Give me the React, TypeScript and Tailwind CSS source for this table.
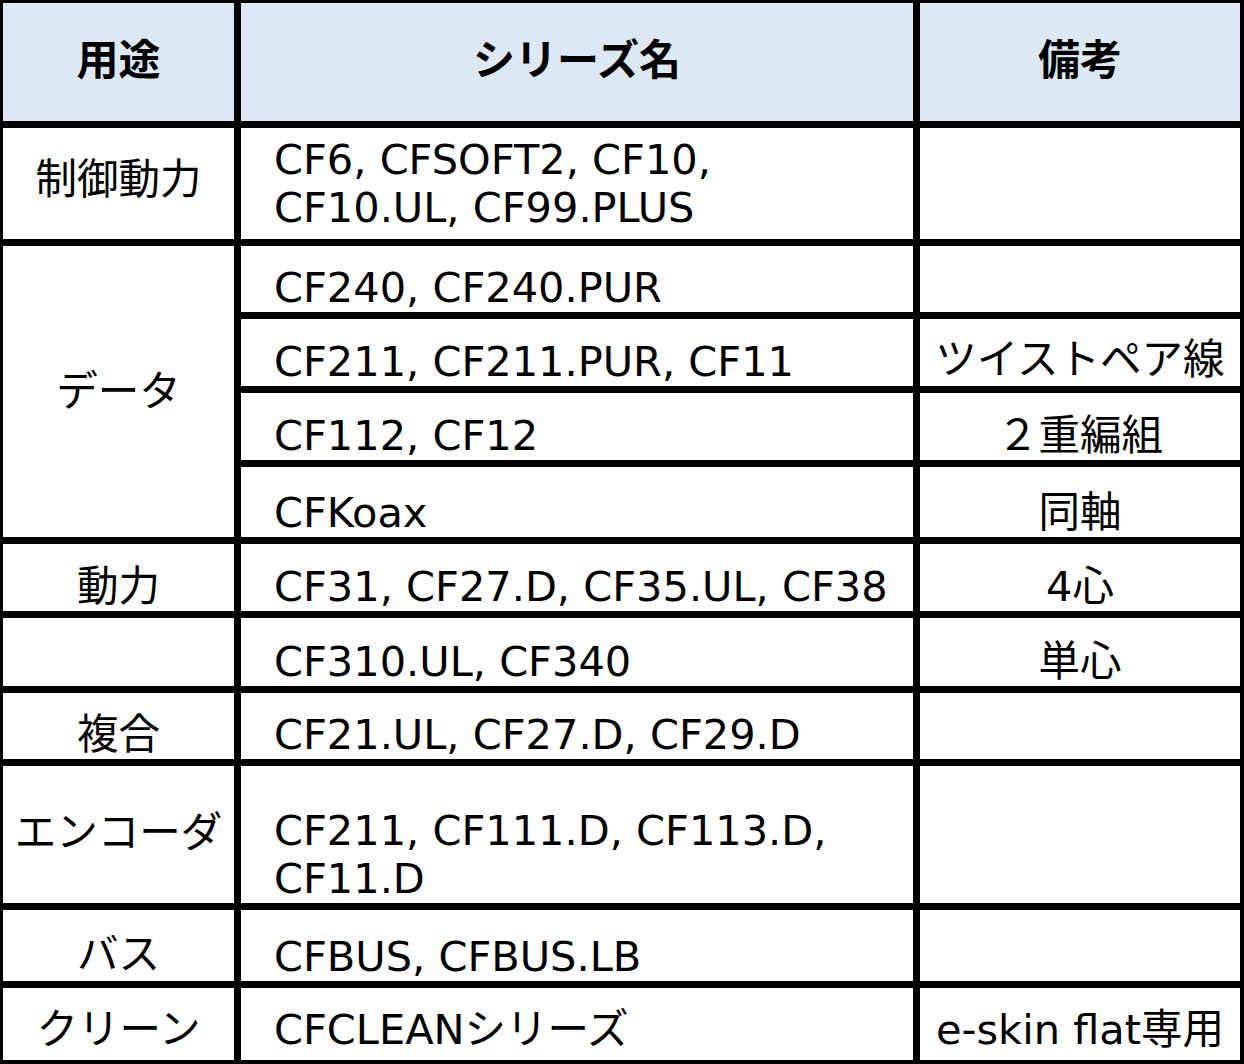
import React from "react";

// 用途 / シリーズ名 / 備考 table
const font = { fontFamily: '"DejaVu Sans", "Noto Sans CJK JP", sans-serif' };

const base = "bg-white flex leading-[48px] text-[41.5px] text-black";
const c1 = `${base} justify-center`;
const c2 = `${base} pl-[33px]`;
const c3 = `${base} justify-center`;
const head = "bg-[#dce9f5] flex items-center justify-center pb-[4px] text-[42px] font-bold text-black";

const App = () => {
  return (
    <div className="w-[1244px] h-[1064px] bg-white" style={font}>
      <div className="grid grid-cols-[231px_672px_320px] grid-rows-[118px_111px_66px_67px_67px_70px_67px_68px_66px_137px_71px_72px] gap-[7px] bg-black pt-[3px] pl-[3px] pr-[4px] pb-[4px]">
        <div className={head}>用途</div>
        <div className={head}>シリーズ名</div>
        <div className={head}>備考</div>

        <div className={`${c1} items-center pb-[8px]`}>制御動力</div>
        <div className={`${c2} items-center`}>
          <div>
            CF6, CFSOFT2, CF10,
            <br />
            CF10.UL, CF99.PLUS
          </div>
        </div>
        <div className={c3}></div>

        <div className={`${c1} items-center row-span-4`}>データ</div>
        <div className={`${c2} items-end`}>CF240, CF240.PUR</div>
        <div className={c3}></div>
        <div className={`${c2} items-end`}>CF211, CF211.PUR, CF11</div>
        <div className={`${c3} items-end pb-[2px]`}>ツイストペア線</div>
        <div className={`${c2} items-end`}>CF112, CF12</div>
        <div className={`${c3} items-end`}>２重編組</div>
        <div className={`${c2} items-end`}>CFKoax</div>
        <div className={`${c3} items-end`}>同軸</div>

        <div className={`${c1} items-end`}>動力</div>
        <div className={`${c2} items-end`}>CF31, CF27.D, CF35.UL, CF38</div>
        <div className={`${c3} items-end`}>4心</div>

        <div className={c1}></div>
        <div className={`${c2} items-end`}>CF310.UL, CF340</div>
        <div className={`${c3} items-end`}>単心</div>

        <div className={`${c1} items-end`}>複合</div>
        <div className={`${c2} items-end`}>CF21.UL, CF27.D, CF29.D</div>
        <div className={c3}></div>

        <div className={`${c1} items-center pb-[4px]`}>エンコーダ</div>
        <div className={`${c2} items-end`}>
          <div>
            CF211, CF111.D, CF113.D,
            <br />
            CF11.D
          </div>
        </div>
        <div className={c3}></div>

        <div className={`${c1} items-end pb-[2px]`}>バス</div>
        <div className={`${c2} items-end`}>CFBUS, CFBUS.LB</div>
        <div className={c3}></div>

        <div className={`${c1} items-end pb-[6px]`}>クリーン</div>
        <div className={`${c2} items-end pb-[6px]`}>CFCLEANシリーズ</div>
        <div className={`${c3} items-end pb-[6px]`}>e-skin flat専用</div>
      </div>
    </div>
  );
};

export default App;
